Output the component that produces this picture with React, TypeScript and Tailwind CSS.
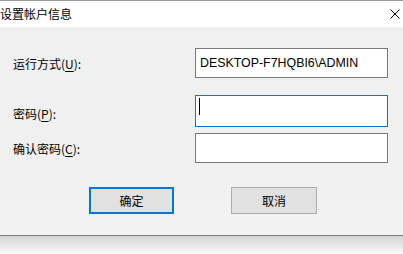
const cjk = "font-['Noto_Sans_CJK_SC','Noto_Sans',sans-serif]"

function Label({ text, hotkey }: { text: string; hotkey: string }) {
  return (
    <span className={`${cjk} text-[12px] leading-none text-black`}>
      {text}(<u className="underline-offset-2">{hotkey}</u>):
    </span>
  )
}

export default function App() {
  return (
    <div className="flex h-[254px] w-[403px] flex-col bg-white">
      {/* title bar */}
      <div className="flex h-[27px] shrink-0 items-center justify-between border-t border-[#9a9a9a] bg-white">
        <span className={`${cjk} text-[12px] text-black`}>设置帐户信息</span>
        <svg className="mr-[3px]" width="10" height="10" viewBox="0 0 10 10" fill="none" stroke="#000" strokeWidth="1">
          <path d="M0.5 0.5 L9.5 9.5 M9.5 0.5 L0.5 9.5" />
        </svg>
      </div>

      {/* body */}
      <div className="flex h-[208px] shrink-0 flex-col bg-gradient-to-b from-[#f0f0f0] from-70% to-[#f3f3f3] pt-[21px]">
        <div className="flex h-[30px] items-center">
          <div className="w-[195px] pl-[13px]">
            <Label text="运行方式" hotkey="U" />
          </div>
          <div className="flex h-[30px] w-[193px] items-center border border-[#7a7a7a] bg-white pl-[4px] font-['Liberation_Sans',sans-serif] text-[12.4px] text-black">
            DESKTOP-F7HQBI6\ADMIN
          </div>
        </div>

        <div className="mt-[17px] flex h-[32px] items-center">
          <div className="w-[195px] pl-[13px] pt-[3px]">
            <Label text="密码" hotkey="P" />
          </div>
          <div className="h-[32px] w-[193px] border border-[#0078d7] bg-white pl-[3px] pt-[2px]">
            <div className="h-[17px] w-px bg-black" />
          </div>
        </div>

        <div className="mt-[6px] flex h-[30px] items-center">
          <div className="w-[195px] pl-[13px]">
            <Label text="确认密码" hotkey="C" />
          </div>
          <div className="h-[30px] w-[193px] border border-[#7a7a7a] bg-white" />
        </div>

        <div className="mt-[24px] flex h-[27px] pl-[89px]">
          <button className={`${cjk} h-[27px] w-[85px] border-2 border-[#0078d7] bg-[#e1e1e1] text-[12px] text-black`}>
            确定
          </button>
          <button className={`${cjk} ml-[57px] h-[27px] w-[86px] border border-[#adadad] bg-[#e1e1e1] text-[12px] text-black`}>
            取消
          </button>
        </div>
      </div>

      {/* bottom edge + shadow */}
      <div className="h-px shrink-0 bg-[#7a7a7a]" />
      <div className="flex-1 bg-gradient-to-b from-[#d4d4d4] to-[#fafafa]" />
    </div>
  )
}
